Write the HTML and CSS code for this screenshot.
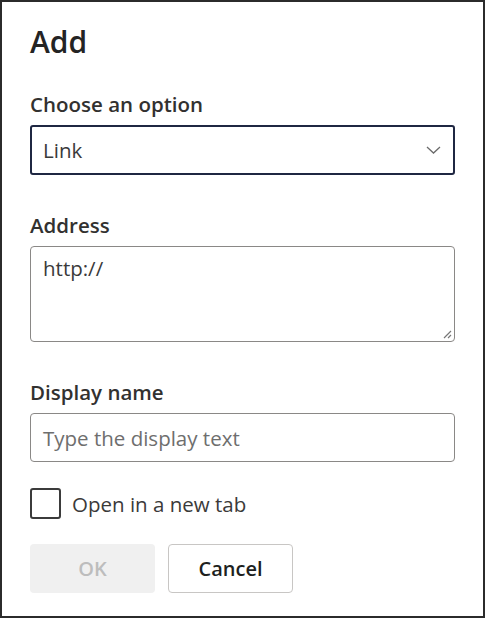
FILE: index.html
```html
<!DOCTYPE html>
<html lang="en">

<head>
    <meta charset="UTF-8">
    <title>Add</title>
    <link rel="stylesheet" href="styles.css">
</head>

<body>
    <div class="dialog">
        <h1 class="title">Add</h1>

        <div class="field first">
            <label class="label">Choose an option</label>
            <div class="select">
                <span>Link</span>
                <svg class="chevron" width="15" height="8" viewBox="0 0 15 8">
                    <path d="M1 1 L7.5 7 L14 1" fill="none" stroke="#6b6b6b" stroke-width="1.3" />
                </svg>
            </div>
        </div>

        <div class="field">
            <label class="label">Address</label>
            <div class="textarea">
                <span>http://</span>
                <svg class="grip" width="10" height="10" viewBox="0 0 10 10">
                    <path d="M9 2 L2 9 M9 6 L6 9" stroke="#777" stroke-width="1.2" />
                </svg>
            </div>
        </div>

        <div class="field">
            <label class="label">Display name</label>
            <div class="input">
                <span class="placeholder">Type the display text</span>
            </div>
        </div>

        <div class="check">
            <span class="box"></span>
            <span>Open in a new tab</span>
        </div>

        <div class="buttons">
            <button class="btn btn-ok">OK</button>
            <button class="btn btn-cancel">Cancel</button>
        </div>
    </div>
</body>

</html>
```

FILE: styles.css
```css
* {
    padding: 0;
    margin: 0;
    box-sizing: border-box;
}

body {
    background: #fff;
    font-family: "Open Sans", "Noto Sans", sans-serif;
    color: #3a3a3a;
}

.dialog {
    width: 485px;
    height: 618px;
    border: 2px solid #2b2b2b;
    padding: 22px 28px 0 28px;
    display: flex;
    flex-direction: column;
}

.title {
    font-size: 30px;
    font-weight: 600;
    line-height: 36px;
    color: #242424;
}

.field {
    display: flex;
    flex-direction: column;
}

.field.first {
    margin-top: 31px;
}

.field + .field {
    margin-top: 37px;
}

.label {
    font-size: 20.5px;
    font-weight: 600;
    line-height: 26px;
    margin-bottom: 8px;
    color: #323130;
}

.select {
    height: 50px;
    border: 2px solid #1f2742;
    border-radius: 3px;
    display: flex;
    align-items: center;
    justify-content: space-between;
    padding: 0 12px 0 11px;
    font-size: 20.5px;
}

.textarea {
    height: 96px;
    border: 1px solid #8a8886;
    border-radius: 4px;
    padding: 7px 12px;
    font-size: 20.5px;
    line-height: 28px;
    position: relative;
}

.grip {
    position: absolute;
    right: 2px;
    bottom: 2px;
}

.input {
    height: 49px;
    border: 1px solid #8a8886;
    border-radius: 4px;
    padding: 0 12px;
    display: flex;
    align-items: center;
    font-size: 20.5px;
}

.placeholder {
    color: #6e6e6e;
}

.check {
    display: flex;
    align-items: center;
    gap: 11px;
    margin-top: 26px;
    font-size: 20.5px;
    color: #3b3a39;
}

.check .box {
    width: 31px;
    height: 31px;
    border: 2px solid #3b3b3b;
    border-radius: 3px;
}

.buttons {
    display: flex;
    gap: 13px;
    margin-top: 25px;
}

.btn {
    width: 125px;
    height: 49px;
    border-radius: 4px;
    font-family: "Open Sans", "Noto Sans", sans-serif;
    font-size: 20px;
    font-weight: 600;
}

.btn-ok {
    background: #f0f0f0;
    border: 0;
    color: #bdbdbd;
}

.btn-cancel {
    background: #fff;
    border: 1px solid #c8c6c4;
    color: #201f1e;
}
```
